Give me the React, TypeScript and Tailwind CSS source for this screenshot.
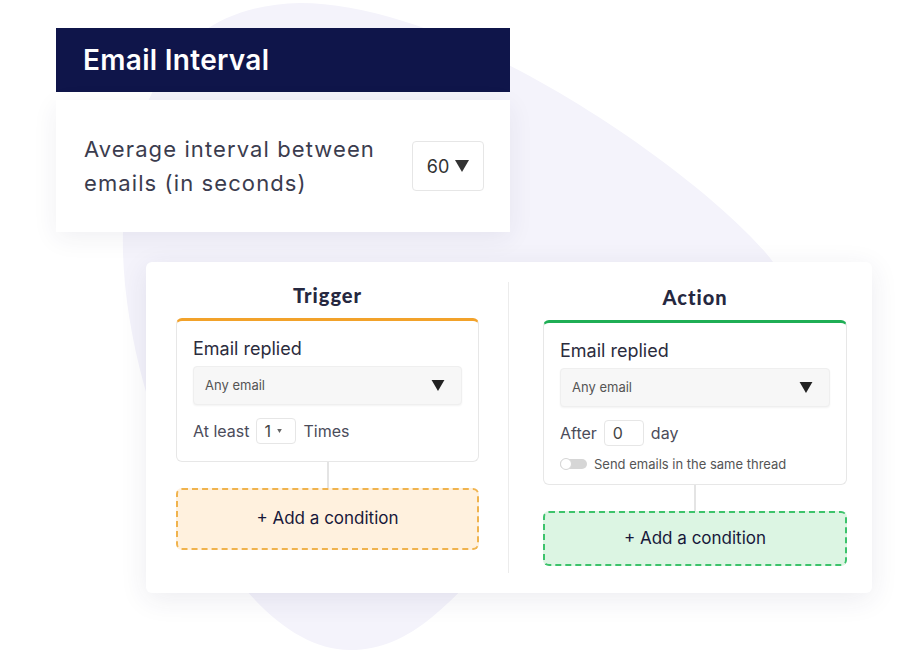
import React from "react";

function Caret({ className = "" }: { className?: string }) {
  return (
    <svg viewBox="0 0 14 12" className={className} fill="currentColor">
      <path d="M0 0 L14 0 L7 12 Z" />
    </svg>
  );
}

function Select({ text }: { text: string }) {
  return (
    <div className="flex h-[39px] items-center justify-between rounded-[4px] border border-[#efefef] bg-[#f7f7f7] pl-[11px] pr-[16px] shadow-[0_1px_2px_rgba(0,0,0,0.05)]">
      <span className="text-[13px] text-[#555]">{text}</span>
      <Caret className="h-[11px] w-[14px] text-[#222]" />
    </div>
  );
}

function AddCondition({ variant }: { variant: "orange" | "green" }) {
  const cls =
    variant === "orange"
      ? "h-[62px] border-[#f0b34d] bg-[#fff1de]"
      : "h-[55px] border-[#3cc36b] bg-[#dcf5e3]";
  return (
    <div
      className={`flex items-center justify-center rounded-[6px] border-2 border-dashed text-[17px] text-[#17183a] ${cls}`}
    >
      + Add a condition
    </div>
  );
}

export default function App() {
  return (
    <div
      className="relative h-[652px] w-[905px] overflow-hidden bg-white"
      style={{ fontFamily: "Inter, 'Noto Sans', sans-serif" }}
    >
      <svg
        className="absolute left-0 top-0"
        width="905"
        height="652"
        viewBox="0 0 905 652"
      >
        <path
          d="M300 3 C 190 5, 128 80, 123 230 C 118 400, 230 650, 350 650 C 430 650, 470 570, 560 490 C 690 390, 820 330, 773 262 C 720 190, 470 3, 300 3 Z"
          fill="#f4f3fb"
        />
      </svg>

      <div className="relative flex flex-col pl-[56px] pt-[28px]">
        {/* Email Interval card */}
        <div className="flex w-[454px] flex-col">
          <div className="flex h-[64px] items-center bg-[#0f154a] pl-[27px]">
            <span className="text-[28px] font-semibold tracking-[0.3px] text-white">
              Email Interval
            </span>
          </div>
          <div className="mt-[8px] flex h-[132px] items-center justify-between bg-white pl-[28px] pr-[26px] shadow-[0_6px_24px_rgba(40,40,90,0.07)]">
            <div className="text-[22px] leading-[34px] tracking-[1.1px] text-[#3b3c4e]">
              Average interval between
              <br />
              emails (in seconds)
            </div>
            <div className="flex h-[50px] w-[72px] items-center justify-center gap-[6px] rounded-[4px] border border-[#e6e6e6] text-[18px] text-[#333]">
              <span>60</span>
              <Caret className="h-[12px] w-[14px] text-[#333]" />
            </div>
          </div>
        </div>

        {/* Workflow card */}
        <div className="ml-[90px] mt-[30px] flex h-[331px] w-[726px] rounded-[6px] bg-white pb-[20px] pl-[30px] pr-[25px] pt-[20px] shadow-[0_6px_28px_rgba(40,40,90,0.09)]">
          {/* Trigger column */}
          <div className="flex w-[303px] flex-col">
            <div
              className="h-[26px] text-center text-[20px] font-black leading-[26px] tracking-[1px] text-[#262840]"
              style={{ fontFamily: "Lato, sans-serif" }}
            >
              Trigger
            </div>
            <div className="mt-[10px] flex flex-col rounded-[6px] border border-t-[3px] border-[#e7e7e7] border-t-[#f2a22a] px-[16px] pb-[17px] pt-[16px]">
              <div className="h-[24px] text-[18px] leading-[24px] text-[#2b2c3d]">
                Email replied
              </div>
              <div className="mt-[5px]">
                <Select text="Any email" />
              </div>
              <div className="mt-[13px] flex items-center gap-[7px] text-[16px] text-[#4b4c5a]">
                <span>At least</span>
                <div className="flex h-[26px] w-[40px] items-center gap-[6px] rounded-[4px] border border-[#e6e6e6] pl-[7px] text-[#444]">
                  <span>1</span>
                  <Caret className="h-[4px] w-[5px] text-[#666]" />
                </div>
                <span>Times</span>
              </div>
            </div>
            <div className="ml-[151px] h-[26px] w-[2px] bg-[#e4e4e4]" />
            <AddCondition variant="orange" />
          </div>

          {/* Divider */}
          <div className="ml-[29px] w-[1px] self-stretch bg-[#ececec]" />

          {/* Action column */}
          <div className="ml-[34px] flex w-[304px] flex-col pt-[2px]">
            <div
              className="h-[26px] text-center text-[20px] font-black leading-[26px] tracking-[1px] text-[#262840]"
              style={{ fontFamily: "Lato, sans-serif" }}
            >
              Action
            </div>
            <div className="mt-[10px] flex flex-col rounded-[6px] border border-t-[3px] border-[#e7e7e7] border-t-[#1fae55] px-[16px] pb-[11px] pt-[16px]">
              <div className="h-[24px] text-[18px] leading-[24px] text-[#2b2c3d]">
                Email replied
              </div>
              <div className="mt-[5px]">
                <Select text="Any email" />
              </div>
              <div className="mt-[13px] flex items-center gap-[7px] text-[16px] text-[#4b4c5a]">
                <span>After</span>
                <div className="flex h-[26px] w-[40px] items-center rounded-[4px] border border-[#e6e6e6] pl-[8px] text-[#444]">
                  0
                </div>
                <span>day</span>
              </div>
              <div className="mt-[9px] flex items-center gap-[7px]">
                <div className="flex h-[10px] w-[27px] items-center rounded-full bg-[#d6d6d6]">
                  <div className="h-[12px] w-[12px] rounded-full border border-[#d6d6d6] bg-white" />
                </div>
                <span className="text-[13px] leading-[18px] text-[#555]">
                  Send emails in the same thread
                </span>
              </div>
            </div>
            <div className="ml-[151px] h-[26px] w-[2px] bg-[#e4e4e4]" />
            <AddCondition variant="green" />
          </div>
        </div>
      </div>
    </div>
  );
}
